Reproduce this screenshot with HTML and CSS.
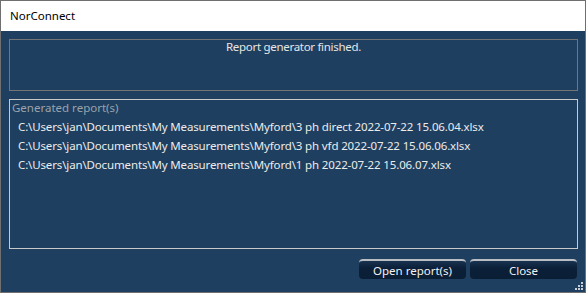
FILE: index.html
```html
<!DOCTYPE html>
<html lang="en">
<head>
    <meta charset="UTF-8">
    <title>NorConnect</title>
    <link rel="stylesheet" href="styles.css">
</head>
<body>
    <div class="window">
        <div class="titlebar">NorConnect</div>
        <div class="content">
            <div class="status-box">Report generator finished.</div>
            <div class="reports-box">
                <div class="reports-label">Generated report(s)</div>
                <ul class="reports-list">
                    <li>C:\Users\jan\Documents\My Measurements\Myford\3 ph direct 2022-07-22 15.06.04.xlsx</li>
                    <li>C:\Users\jan\Documents\My Measurements\Myford\3 ph vfd 2022-07-22 15.06.06.xlsx</li>
                    <li>C:\Users\jan\Documents\My Measurements\Myford\1 ph 2022-07-22 15.06.07.xlsx</li>
                </ul>
            </div>
            <div class="buttons">
                <button class="btn">Open report(s)</button>
                <button class="btn">Close</button>
            </div>
            <svg class="grip" width="10" height="10" viewBox="0 0 10 10">
                <rect x="7" y="1" width="2" height="2" fill="#c6cdd6"/>
                <rect x="4" y="4" width="2" height="2" fill="#c6cdd6"/>
                <rect x="7" y="4" width="2" height="2" fill="#c6cdd6"/>
                <rect x="1" y="7" width="2" height="2" fill="#c6cdd6"/>
                <rect x="4" y="7" width="2" height="2" fill="#c6cdd6"/>
                <rect x="7" y="7" width="2" height="2" fill="#c6cdd6"/>
            </svg>
        </div>
    </div>
</body>
</html>
```

FILE: styles.css
```css
body {
    margin: 0;
    font-family: "Noto Sans", "Open Sans", sans-serif;
    font-size: 11.5px;
}
.window {
    width: 586px;
    height: 293px;
    box-sizing: border-box;
    border: 1px solid #6f6f6f;
    display: flex;
    flex-direction: column;
    background-color: #1e3f5f;
}
.titlebar {
    height: 30px;
    background-color: #fff;
    color: #000;
    padding-left: 9px;
    line-height: 30px;
}
.content {
    position: relative;
    flex: 1;
    padding: 8px 7px 0 8px;
    display: flex;
    flex-direction: column;
}
.status-box {
    height: 52px;
    box-sizing: border-box;
    border: 1px solid #747474;
    color: #e6e6e6;
    text-align: center;
    line-height: 14px;
    letter-spacing: -0.3px;
}
.reports-box {
    margin-top: 8px;
    height: 150px;
    box-sizing: border-box;
    border: 1px solid #c9c9c9;
    padding: 0 2px;
}
.reports-label {
    color: #9aa3ad;
    line-height: 16px;
}
.reports-list {
    list-style: none;
    margin: 1px 0 0;
    padding: 0 0 0 6px;
    color: #ececec;
    letter-spacing: -0.14px;
}
.reports-list li {
    line-height: 19px;
}
.buttons {
    margin-top: 10px;
    display: flex;
    justify-content: flex-end;
    gap: 4px;
    padding-right: 1px;
}
.btn {
    width: 107px;
    height: 20px;
    padding: 0;
    border: none;
    border-top: 2px solid #b9bec4;
    border-radius: 4px;
    background: linear-gradient(#1a3350, #0b1f38 40%, #0a1e36);
    color: #f2f2f2;
    font-family: inherit;
    font-size: 11.5px;
    line-height: 17px;
}
.grip {
    position: absolute;
    right: 1px;
    bottom: 1px;
}
```
